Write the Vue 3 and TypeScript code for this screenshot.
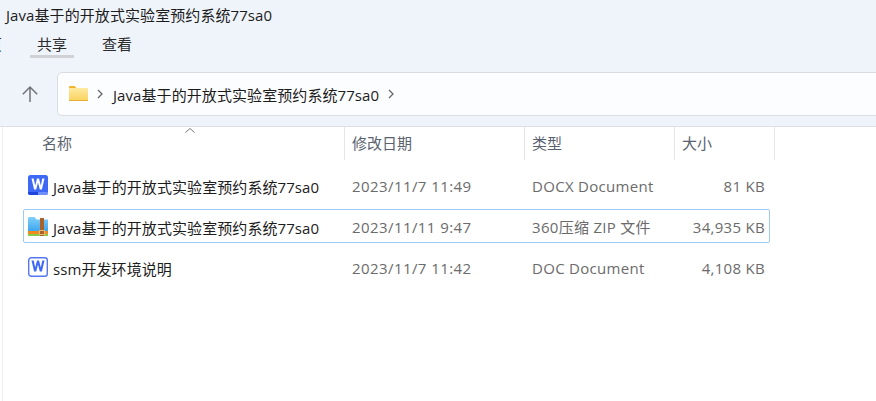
<template>
  <div class="window">
    <div class="chrome">
      <div class="title">Java基于的开放式实验室预约系统77sa0</div>
      <div class="menu">
        <span class="tab">主页</span>
        <span class="tab active">共享</span>
        <span class="tab">查看</span>
      </div>
      <div class="nav">
        <button class="up" aria-label="up">
          <svg width="18" height="18" viewBox="0 0 18 18" fill="none" stroke="#6f7276" stroke-width="1.5">
            <path d="M9 17V2M1.800 9.200 9 2l7.200 7.200" />
          </svg>
        </button>
        <div class="address">
          <svg class="folder" width="19" height="15" viewBox="0 0 19 15">
            <defs>
              <linearGradient id="fold" x1="0" y1="0" x2="0" y2="1">
                <stop offset="0" stop-color="#fde9a0" />
                <stop offset="1" stop-color="#fbd25c" />
              </linearGradient>
            </defs>
            <path d="M0 1.500C0 .7.600 0 1.400 0h4.200l2 2.200H0z" fill="#f0b429" />
            <rect x="0" y="2" width="19" height="13" rx="1" fill="url(#fold)" />
            <rect x="0" y="14" width="19" height="1" fill="#e8ad36" />
          </svg>
          <svg class="chev" width="6" height="10" viewBox="0 0 6 10" fill="none" stroke="#666" stroke-width="1.300">
            <path d="m1 1 4 4-4 4" />
          </svg>
          <span class="crumb">Java基于的开放式实验室预约系统77sa0</span>
          <svg class="chev" width="6" height="10" viewBox="0 0 6 10" fill="none" stroke="#666" stroke-width="1.300">
            <path d="m1 1 4 4-4 4" />
          </svg>
        </div>
      </div>
    </div>
    <div class="list">
      <div class="head">
        <div v-for="col in columns" :key="col.label" class="hcell" :class="col.cls">{{ col.label }}</div>
        <svg class="sort" width="10" height="5" viewBox="0 0 10 5" fill="none" stroke="#777" stroke-width="1">
          <path d="m.5 4.500 4.500-4 4.500 4" />
        </svg>
      </div>
      <div class="rows">
        <div v-for="f in files" :key="f.type" class="row" :class="{ selected: f.selected }">
          <div class="cell name">
            <svg v-if="f.icon === 'docx'" class="icon" width="20" height="20" viewBox="0 0 20 20">
              <rect width="20" height="20" rx="2.500" fill="#3e68f6" />
              <path d="M0 17h10v3H2.500A2.500 2.500 0 0 1 0 17.500z" fill="#1f45dd" />
              <path d="M10 17h10v.5a2.500 2.500 0 0 1-2.500 2.500H10z" fill="#6f90fa" />
              <path d="m3.500 3.500 2.600 11h2.100L10 7.500l1.800 7h2.100l2.600-11h-2.200l-1.500 7-1.800-7h-2l-1.800 7-1.500-7z" fill="#fff" />
            </svg>
            <svg v-else-if="f.icon === 'zip'" class="icon" width="20" height="20" viewBox="0 0 20 20">
              <defs>
                <linearGradient id="zipf" x1="0" y1="0" x2="0" y2="1">
                  <stop offset="0" stop-color="#7fd0fa" />
                  <stop offset="1" stop-color="#3fa6f0" />
                </linearGradient>
              </defs>
              <path d="M0 2.500C0 1.500.7 1 1.500 1h5l2 2.500H20V15H0z" fill="url(#zipf)" />
              <rect x="0" y="15" width="20" height="3" fill="#f08c1e" />
              <rect x="0" y="18" width="20" height="2" fill="#8ac84a" />
              <rect x="12" y="2" width="4" height="18" fill="#a8622a" />
              <rect x="11.500" y="14.500" width="5" height="4" fill="none" stroke="#e6bb78" stroke-width="1" />
            </svg>
            <svg v-else class="icon" width="20" height="20" viewBox="0 0 20 20">
              <rect x=".7" y=".7" width="18.600" height="18.600" rx="2.500" fill="#fff" stroke="#5578f2" stroke-width="1.400" />
              <path d="m3.500 3.500 2.600 11h2.100L10 7.500l1.800 7h2.100l2.600-11h-2.200l-1.500 7-1.800-7h-2l-1.800 7-1.500-7z" fill="#3e68f6" />
            </svg>
            <span>{{ f.name }}</span>
          </div>
          <div class="cell date">{{ f.date }}</div>
          <div class="cell type">{{ f.type }}</div>
          <div class="cell size">{{ f.size }}</div>
        </div>
      </div>
    </div>
  </div>
</template>

<script setup lang="ts">
interface FileRow {
  name: string;
  date: string;
  type: string;
  size: string;
  icon: 'docx' | 'zip' | 'doc';
  selected?: boolean;
}

const columns = [
  { label: '名称', cls: 'c-name' },
  { label: '修改日期', cls: 'c-date' },
  { label: '类型', cls: 'c-type' },
  { label: '大小', cls: 'c-size' },
];

const files: FileRow[] = [
  {
    name: 'Java基于的开放式实验室预约系统77sa0',
    date: '2023/11/7 11:49',
    type: 'DOCX Document',
    size: '81 KB',
    icon: 'docx',
  },
  {
    name: 'Java基于的开放式实验室预约系统77sa0',
    date: '2023/11/11 9:47',
    type: '360压缩 ZIP 文件',
    size: '34,935 KB',
    icon: 'zip',
    selected: true,
  },
  {
    name: 'ssm开发环境说明',
    date: '2023/11/7 11:42',
    type: 'DOC Document',
    size: '4,108 KB',
    icon: 'doc',
  },
];
</script>

<style>
html,
body {
  margin: 0;
  background: #fff;
}
</style>

<style scoped>
.window {
  width: 876px;
  height: 401px;
  overflow: hidden;
  font-family: "Open Sans", "Noto Sans CJK SC", sans-serif;
  font-size: 15px;
  color: #1c1c1c;
  display: flex;
  flex-direction: column;
}

.chrome {
  height: 127px;
  flex: none;
  box-sizing: border-box;
  background: #eff4fa;
  border-bottom: 1px solid #dcdfe6;
  padding-top: 4px;
}

.title {
  height: 22px;
  line-height: 22px;
  padding-left: 6px;
  letter-spacing: 0.08px;
}

.menu {
  display: flex;
  height: 31px;
  margin-top: 7px;
  margin-left: -35px;
  gap: 21px;
  color: #2b2b2b;
}

.tab {
  width: 44px;
  height: 25px;
  line-height: 22px;
  text-align: center;
  box-sizing: border-box;
  flex: none;
}

.tab.active {
  border-bottom: 3px solid #cfd1d4;
}

.nav {
  display: flex;
  align-items: center;
  height: 44px;
  margin-top: 8px;
}

.up {
  width: 57px;
  height: 44px;
  flex: none;
  padding: 0 0 0 3px;
  background: none;
  border: none;
  display: flex;
  align-items: center;
  justify-content: center;
}

.address {
  flex: 1;
  height: 44px;
  box-sizing: border-box;
  margin-right: -6px;
  background: #fcfdff;
  border: 1px solid #dadcdf;
  border-radius: 5px;
  display: flex;
  align-items: center;
  padding-left: 11px;
}

.folder {
  flex: none;
  margin-top: -1px;
}

.chev {
  flex: none;
  margin-left: 9px;
}

.crumb {
  margin-left: 10px;
  letter-spacing: 0.08px;
}

.list {
  flex: 1;
  margin-left: 2px;
  border-left: 1px solid #f0f0f0;
}

.head {
  display: flex;
  position: relative;
  height: 33px;
  color: #5a6270;
}

.sort {
  position: absolute;
  left: 182px;
  top: 1px;
}

.hcell {
  box-sizing: border-box;
  line-height: 33px;
  padding-left: 7px;
  border-right: 1px solid #e6e6e6;
  flex: none;
}

.c-name {
  width: 342px;
  padding-left: 39px;
  border-right: 1px solid #e6e6e6;
}

.c-date {
  width: 180px;
}

.c-type {
  width: 150px;
}

.c-size {
  width: 100px;
}

.rows {
  display: flex;
  flex-direction: column;
  margin-top: 8px;
  margin-left: 20px;
  gap: 7px;
}

.row {
  width: 747px;
  height: 34px;
  box-sizing: border-box;
  border: 1px solid transparent;
  border-radius: 2px;
  display: flex;
  align-items: center;
  color: #6b6b6b;
}

.row.selected {
  border-color: #9ccbf3;
}

.cell {
  flex: none;
  white-space: nowrap;
  letter-spacing: 0.3px;
  padding-top: 1px;
}

.name {
  width: 321px;
  display: flex;
  align-items: center;
  color: #1c1c1c;
  padding-left: 4px;
  padding-top: 0;
  box-sizing: border-box;
  letter-spacing: 0.08px;
}

.name span {
  margin-left: 5px;
  padding-top: 2px;
}

.icon {
  flex: none;
}

.date {
  width: 180px;
  padding-left: 7px;
  box-sizing: border-box;
  letter-spacing: 0.42px;
}

.type {
  width: 150px;
  padding-left: 7px;
  box-sizing: border-box;
}

.size {
  width: 90px;
  text-align: right;
}
</style>
